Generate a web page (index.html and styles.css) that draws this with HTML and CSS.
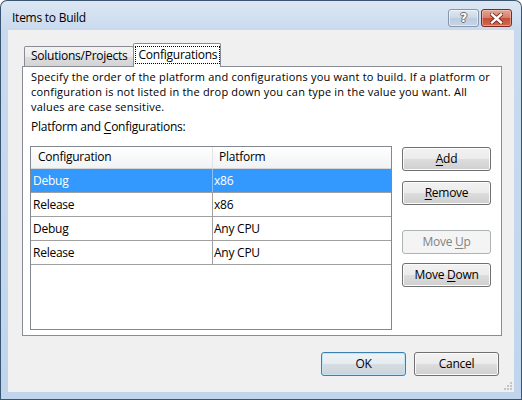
FILE: index.html
```html
<!DOCTYPE html>
<html>
<head>
<meta charset="utf-8">
<link rel="stylesheet" href="styles.css">
</head>
<body>
<div class="window">
  <div class="titlebar">
    <span class="title">Items to Build</span>
    <div class="caption">
      <div class="cbtn help"><span>?</span></div>
      <div class="cbtn close">
        <svg width="13" height="11" viewBox="0 0 13 11"><path d="M2 1.5 L11 9.5 M11 1.5 L2 9.5" stroke="#6b2a1f" stroke-width="4.2" stroke-linecap="square"/><path d="M2 1.5 L11 9.5 M11 1.5 L2 9.5" stroke="#fff" stroke-width="2.4" stroke-linecap="square"/></svg>
      </div>
    </div>
  </div>
  <div class="client">
    <div class="tabs">
      <div class="tab">Solutions/Projects</div>
      <div class="tab active"><span class="focus">Configurations</span></div>
    </div>
    <div class="panel">
      <p class="desc">Specify the order of the platform and configurations you want to build. If a platform or<br>configuration is not listed in the drop down you can type in the value you want. All<br>values are case sensitive.</p>
      <p class="label">Platform and <u>C</u>onfigurations:</p>
      <div class="listarea">
        <div class="grid">
          <div class="ghead"><div class="hc">Configuration</div><div class="hc hc2">Platform</div></div>
          <div class="row sel"><div class="c1">Debug</div><div class="c2">x86</div></div>
          <div class="row"><div class="c1">Release</div><div class="c2">x86</div></div>
          <div class="row"><div class="c1">Debug</div><div class="c2">Any CPU</div></div>
          <div class="row"><div class="c1">Release</div><div class="c2">Any CPU</div></div>
        </div>
        <div class="sidebtns">
          <div class="btn"><u>A</u>dd</div>
          <div class="btn b-remove"><u>R</u>emove</div>
          <div class="btn disabled b-up">Move <u>U</u>p</div>
          <div class="btn b-down">Move <u>D</u>own</div>
        </div>
      </div>
    </div>
    <div class="footer">
      <div class="btn default fbtn">OK</div>
      <div class="btn fbtn cancel">Cancel</div>
    </div>
    <svg class="grip" width="10" height="10" viewBox="0 0 10 10">
      <g fill="#c5c5c5"><rect x="7" y="1" width="2" height="2"/><rect x="4" y="4" width="2" height="2"/><rect x="7" y="4" width="2" height="2"/><rect x="1" y="7" width="2" height="2"/><rect x="4" y="7" width="2" height="2"/><rect x="7" y="7" width="2" height="2"/></g>
    </svg>
  </div>
</div>
</body>
</html>
```
FILE: styles.css
```css
* { box-sizing: border-box; }
body {
  margin: 0;
  font-family: "Open Sans", "Noto Sans", sans-serif;
  font-size: 12px;
  letter-spacing: -0.25px;
  color: #000;
  background: #fff;
}
u { text-decoration: underline; text-underline-offset: 2px; }
.window {
  width: 522px;
  height: 400px;
  border: 1px solid #3a5572;
  border-bottom-color: #2f5b6e;
  border-radius: 7px 7px 0 0;
  background: linear-gradient(#dce7f3, #c9daee 29px, #c0d5ec);
  padding: 0 7px 7px;
  display: flex;
  flex-direction: column;
  overflow: hidden;
}
.titlebar {
  height: 29px;
  margin: 0 -7px;
  padding: 0 9px 0 11px;
  display: flex;
  align-items: flex-start;
}
.title {
  margin-top: 9px;
  line-height: 15px;
  color: #000;
}
.caption {
  margin-left: auto;
  margin-top: 8px;
  display: flex;
  gap: 2px;
}
.cbtn {
  width: 31px;
  height: 18px;
  border-radius: 3px;
  display: flex;
  align-items: center;
  justify-content: center;
}
.help {
  border: 1px solid #8696ab;
  background: linear-gradient(#e0e8f1, #ccd8e6 50%, #bccbde 50%, #c6d4e5);
  box-shadow: inset 0 0 0 1px rgba(255,255,255,0.5);
}
.help span {
  font-family: "DejaVu Sans", sans-serif;
  font-weight: bold;
  font-size: 12px;
  line-height: 12px;
  color: #fff;
  text-shadow: 1px 0 0 #5a6b80, -1px 0 0 #5a6b80, 0 1px 0 #5a6b80, 0 -1px 0 #5a6b80;
}
.close {
  border: 1px solid #7c2a1f;
  background: linear-gradient(#e5a594, #d67d6b 50%, #c74c37 50%, #d36a4f);
  box-shadow: inset 0 0 0 1px rgba(255,220,210,0.45);
}
.client {
  flex: 1;
  background: #f0f0f0;
  position: relative;
  display: flex;
  flex-direction: column;
  padding: 13px 12px 0 14px;
}
.tabs {
  display: flex;
  align-items: flex-end;
  height: 23px;
  padding-left: 2px;
  position: relative;
  z-index: 1;
}
.tab {
  height: 20px;
  border: 1px solid #898c95;
  border-bottom: none;
  background: linear-gradient(#f3f3f3, #ebebeb 50%, #dddddd 50%, #d4d4d4);
  padding: 0 5px 0 6px;
  line-height: 18px;
  border-radius: 2px 2px 0 0;
}
.tab.active {
  height: 24px;
  margin-bottom: -1px;
  margin-left: -1px;
  background: #fff;
  padding: 2px 1px 0 2px;
}
.focus {
  display: inline-block;
  outline: 1px dotted #000;
  outline-offset: 0;
  line-height: 16px;
  padding: 0 2px 0 3px;
}
.panel {
  height: 270px;
  border: 1px solid #898c95;
  background: #fff;
  padding: 2px 10px 0 7px;
}
.desc, .label {
  margin: 0;
  line-height: 15px;
  padding-left: 1px;
  white-space: nowrap;
}
.desc {
  font-size: 11px;
  letter-spacing: 0.2px;
}
.label { margin-top: 5px; }
.listarea {
  display: flex;
  margin-top: 12px;
}
.grid {
  width: 362px;
  height: 184px;
  border: 1px solid #828790;
  background: #fff;
}
.ghead {
  display: grid;
  grid-template-columns: 181px 1fr;
  height: 22px;
  border-bottom: 1px solid #d5d5d5;
  background: linear-gradient(#ffffff, #fafafb 40%, #f1f2f4);
}
.hc {
  padding-left: 7px;
  line-height: 20px;
}
.hc2 {
  border-left: 1px solid #e2e3e5;
  padding-left: 6px;
}
.row {
  display: grid;
  grid-template-columns: 181px 1fr;
  height: 24px;
  border-bottom: 1px solid #a0a0a0;
}
.row .c1 { padding-left: 2px; line-height: 23px; }
.row .c2 { padding-left: 1px; line-height: 23px; border-left: 1px solid #a0a0a0; }
.row.sel { background: #3399ff; color: #fff; }
.row.sel .c2 { border-left-color: #8cc2fa; }
.sidebtns {
  display: flex;
  flex-direction: column;
  margin-left: 10px;
  width: 89px;
  padding-top: 1px;
}
.btn {
  height: 24px;
  border: 1px solid #707070;
  border-radius: 3px;
  background: linear-gradient(#f2f2f2, #ebebeb 50%, #dddddd 50%, #cfcfcf);
  box-shadow: inset 0 0 0 1px #fbfbfb;
  text-align: center;
  line-height: 22px;
}
.b-remove { margin-top: 10px; }
.b-up { margin-top: 25px; }
.b-down { margin-top: 9px; }
.btn.disabled {
  border-color: #adb2b5;
  background: #f4f4f4;
  box-shadow: none;
  color: #838383;
}
.footer {
  display: flex;
  justify-content: flex-end;
  gap: 8px;
  margin-top: 16px;
  padding-right: 3px;
}
.fbtn { width: 85px; height: 24px; }
.btn.default {
  border-color: #3c7fb1;
  box-shadow: inset 0 0 0 1px #c2e4f6;
  background: linear-gradient(#eef3f6, #e5ebef 50%, #d6dde2 50%, #cbd3d9);
}
.grip {
  position: absolute;
  right: 1px;
  bottom: 1px;
}
```
